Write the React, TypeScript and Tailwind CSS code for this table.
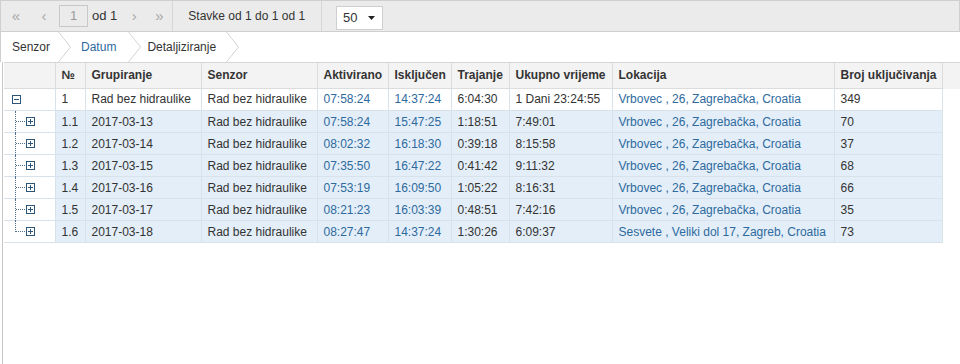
import React from "react";

type Row = {
  no: string;
  grp: string;
  senzor: string;
  akt: string;
  isk: string;
  traj: string;
  uk: string;
  lok: string;
  broj: string;
};

const rows: Row[] = [
  { no: "1.1", grp: "2017-03-13", senzor: "Rad bez hidraulike", akt: "07:58:24", isk: "15:47:25", traj: "1:18:51", uk: "7:49:01", lok: "Vrbovec , 26, Zagrebačka, Croatia", broj: "70" },
  { no: "1.2", grp: "2017-03-14", senzor: "Rad bez hidraulike", akt: "08:02:32", isk: "16:18:30", traj: "0:39:18", uk: "8:15:58", lok: "Vrbovec , 26, Zagrebačka, Croatia", broj: "37" },
  { no: "1.3", grp: "2017-03-15", senzor: "Rad bez hidraulike", akt: "07:35:50", isk: "16:47:22", traj: "0:41:42", uk: "9:11:32", lok: "Vrbovec , 26, Zagrebačka, Croatia", broj: "68" },
  { no: "1.4", grp: "2017-03-16", senzor: "Rad bez hidraulike", akt: "07:53:19", isk: "16:09:50", traj: "1:05:22", uk: "8:16:31", lok: "Vrbovec , 26, Zagrebačka, Croatia", broj: "66" },
  { no: "1.5", grp: "2017-03-17", senzor: "Rad bez hidraulike", akt: "08:21:23", isk: "16:03:39", traj: "0:48:51", uk: "7:42:16", lok: "Vrbovec , 26, Zagrebačka, Croatia", broj: "35" },
  { no: "1.6", grp: "2017-03-18", senzor: "Rad bez hidraulike", akt: "08:27:47", isk: "14:37:24", traj: "1:30:26", uk: "6:09:37", lok: "Sesvete , Veliki dol 17, Zagreb, Croatia", broj: "73" },
];

const widths = [51, 30, 116, 116, 71, 63, 58, 103, 222, 108];
const headers = ["", "№", "Grupiranje", "Senzor", "Aktivirano", "Isključen", "Trajanje", "Ukupno vrijeme", "Lokacija", "Broj uključivanja"];

const Box = ({ minus }: { minus?: boolean }) => (
  <svg width="9" height="9" viewBox="0 0 9 9" className="block">
    <rect x="0.5" y="0.5" width="8" height="8" fill="white" stroke="#2c5577" />
    <line x1="2" y1="4.5" x2="7" y2="4.5" stroke="#2c5577" />
    {!minus && <line x1="4.5" y1="2" x2="4.5" y2="7" stroke="#2c5577" />}
  </svg>
);

const Chevron = () => (
  <svg width="13" height="30" viewBox="0 0 13 30" className="block">
    <polyline points="0.5,0 12.5,15 0.5,30" fill="none" stroke="#d4d4d4" />
  </svg>
);

const td = "border-r border-b border-[#d8e2ea] px-[6px] h-[22px] whitespace-nowrap";

export default function App() {
  return (
    <div className="w-[960px] h-[364px] bg-white text-[12px] text-[#333] font-['Liberation_Sans',Arial,sans-serif] overflow-hidden">
      {/* pager */}
      <div className="flex items-center h-[32px] bg-[#ebebeb] border border-[#cfcfcf]">
        <span className="w-[30px] text-center text-[#a8a8a8] text-[15px]">«</span>
        <span className="w-[26px] text-center text-[#a8a8a8] text-[15px]">‹</span>
        <span className="ml-[2px] w-[29px] h-[22px] border border-[#c8c8c8] bg-[#ebebeb] text-[#999] text-[13px] flex items-center justify-center">1</span>
        <span className="ml-[4px] text-[13px]">od 1</span>
        <span className="ml-[11px] w-[12px] text-center text-[#a8a8a8] text-[15px]">›</span>
        <span className="ml-[12px] w-[14px] text-center text-[#a8a8a8] text-[15px]">»</span>
        <div className="ml-[6px] h-full border-l border-[#d6d6d6]" />
        <span className="ml-[15px]">Stavke od 1 do 1 od 1</span>
        <div className="ml-[16px] h-full border-l border-[#d6d6d6]" />
        <div className="ml-[14px] w-[47px] h-[24px] bg-white border border-[#cfcfcf] flex items-center justify-between pl-[6px] pr-[7px] mt-[4px]">
          <span className="text-[13px]">50</span>
          <svg width="7" height="4" viewBox="0 0 7 4"><polygon points="0,0 7,0 3.5,4" fill="#222" /></svg>
        </div>
      </div>

      {/* breadcrumb */}
      <div className="flex items-center h-[30px] border-l border-[#cfcfcf]">
        <span className="pl-[11px] pr-[8px]">Senzor</span>
        <Chevron />
        <span className="pl-[10px] pr-[12px] text-[#2e6a9e]">Datum</span>
        <Chevron />
        <span className="pl-[6px] pr-[10px]">Detaljiziranje</span>
        <Chevron />
      </div>

      {/* grid */}
      <div className="ml-[2px] border-l border-[#c8c8c8] h-[302px] pl-[1px]">
        <div className="bg-[#f3f3f3] border-t border-[#d6d6d6]">
          <table className="border-collapse table-fixed w-[938px]">
            <colgroup>
              {widths.map((w, i) => (
                <col key={i} style={{ width: w }} />
              ))}
            </colgroup>
            <thead>
              <tr>
                {headers.map((h, i) => (
                  <th key={i} className="border-r border-b border-[#dcdcdc] px-[6px] h-[25px] text-left font-bold text-[#333] whitespace-nowrap">
                    {h}
                  </th>
                ))}
              </tr>
            </thead>
          </table>
        </div>
        <table className="border-collapse table-fixed w-[938px]">
          <colgroup>
            {widths.map((w, i) => (
              <col key={i} style={{ width: w }} />
            ))}
          </colgroup>
          <tbody>
            <tr className="bg-white">
              <td className={td + " !px-0"}>
                <div className="pl-[8px]"><Box minus /></div>
              </td>
              <td className={td}>1</td>
              <td className={td}>Rad bez hidraulike</td>
              <td className={td}>Rad bez hidraulike</td>
              <td className={td + " text-[#2e6a9e]"}>07:58:24</td>
              <td className={td + " text-[#2e6a9e]"}>14:37:24</td>
              <td className={td}>6:04:30</td>
              <td className={td}>1 Dani 23:24:55</td>
              <td className={td + " text-[#2e6a9e]"}>Vrbovec , 26, Zagrebačka, Croatia</td>
              <td className={td}>349</td>
            </tr>
            {rows.map((r, idx) => (
              <tr key={r.no} className="bg-[#e3eef8]">
                <td className={td + " !px-0 bg-white"}>
                  <div className="relative h-[21px] flex items-center pl-[22px]">
                    <div
                      className={
                        "absolute left-[11px] top-0 border-l border-dotted border-[#4d6f8c] " +
                        (idx === rows.length - 1 ? "h-[11px]" : "h-[22px]")
                      }
                    />
                    <div className="absolute left-[12px] top-[10px] w-[9px] border-t border-dotted border-[#4d6f8c]" />
                    <Box />
                  </div>
                </td>
                <td className={td}>{r.no}</td>
                <td className={td}>{r.grp}</td>
                <td className={td}>{r.senzor}</td>
                <td className={td + " text-[#2e6a9e]"}>{r.akt}</td>
                <td className={td + " text-[#2e6a9e]"}>{r.isk}</td>
                <td className={td}>{r.traj}</td>
                <td className={td}>{r.uk}</td>
                <td className={td + " text-[#2e6a9e]"}>{r.lok}</td>
                <td className={td}>{r.broj}</td>
              </tr>
            ))}
          </tbody>
        </table>
      </div>
    </div>
  );
}
